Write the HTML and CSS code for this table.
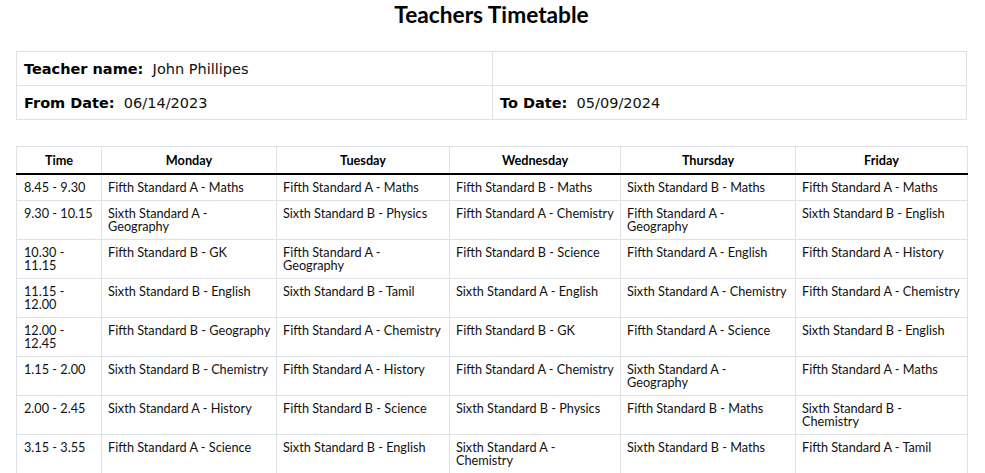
FILE: index.html
```html
<!DOCTYPE html>
<html lang="en">
<head>
    <meta charset="UTF-8">
    <meta name="viewport" content="width=device-width, initial-scale=1.0">
    <title>Teachers Timetable</title>
    <link rel="stylesheet" href="styles.css">
</head>
<body>

<div class="page">
    <h1 class="title">Teachers Timetable</h1>

    <table class="info">
        <tr>
            <td><b>Teacher name:</b>&nbsp; John Phillipes</td>
            <td></td>
        </tr>
        <tr>
            <td><b>From Date:</b>&nbsp; 06/14/2023</td>
            <td><b>To Date:</b>&nbsp; 05/09/2024</td>
        </tr>
    </table>

    <table class="timetable">
        <colgroup>
            <col class="col-time">
            <col class="col-mon">
            <col class="col-tue">
            <col class="col-wed">
            <col class="col-thu">
            <col class="col-fri">
        </colgroup>
        <thead>
            <tr>
                <th>Time</th>
                <th>Monday</th>
                <th>Tuesday</th>
                <th>Wednesday</th>
                <th>Thursday</th>
                <th>Friday</th>
            </tr>
        </thead>
        <tbody>
            <tr>
                <td>8.45 - 9.30</td>
                <td>Fifth Standard A - Maths</td>
                <td>Fifth Standard A - Maths</td>
                <td>Fifth Standard B - Maths</td>
                <td>Sixth Standard B - Maths</td>
                <td>Fifth Standard A - Maths</td>
            </tr>
            <tr>
                <td>9.30 - 10.15</td>
                <td>Sixth Standard A -<br>Geography</td>
                <td>Sixth Standard B - Physics</td>
                <td>Fifth Standard A - Chemistry</td>
                <td>Fifth Standard A -<br>Geography</td>
                <td>Sixth Standard B - English</td>
            </tr>
            <tr>
                <td>10.30 -<br>11.15</td>
                <td>Fifth Standard B - GK</td>
                <td>Fifth Standard A -<br>Geography</td>
                <td>Fifth Standard B - Science</td>
                <td>Fifth Standard A - English</td>
                <td>Fifth Standard A - History</td>
            </tr>
            <tr>
                <td>11.15 -<br>12.00</td>
                <td>Sixth Standard B - English</td>
                <td>Sixth Standard B - Tamil</td>
                <td>Sixth Standard A - English</td>
                <td>Sixth Standard A - Chemistry</td>
                <td>Fifth Standard A - Chemistry</td>
            </tr>
            <tr>
                <td>12.00 -<br>12.45</td>
                <td>Fifth Standard B - Geography</td>
                <td>Fifth Standard A - Chemistry</td>
                <td>Fifth Standard B - GK</td>
                <td>Fifth Standard A - Science</td>
                <td>Sixth Standard B - English</td>
            </tr>
            <tr>
                <td>1.15 - 2.00</td>
                <td>Sixth Standard B - Chemistry</td>
                <td>Fifth Standard A - History</td>
                <td>Fifth Standard A - Chemistry</td>
                <td>Sixth Standard A -<br>Geography</td>
                <td>Fifth Standard A - Maths</td>
            </tr>
            <tr>
                <td>2.00 - 2.45</td>
                <td>Sixth Standard A - History</td>
                <td>Fifth Standard B - Science</td>
                <td>Sixth Standard B - Physics</td>
                <td>Fifth Standard B - Maths</td>
                <td>Sixth Standard B -<br>Chemistry</td>
            </tr>
            <tr>
                <td>3.15 - 3.55</td>
                <td>Fifth Standard A - Science</td>
                <td>Sixth Standard B - English</td>
                <td>Sixth Standard A -<br>Chemistry</td>
                <td>Sixth Standard B - Maths</td>
                <td>Fifth Standard A - Tamil</td>
            </tr>
        </tbody>
    </table>
</div>

</body>
</html>
```

FILE: styles.css
```css
body {
    margin: 0;
    background: #fff;
    color: #000;
    font-family: 'Lato', sans-serif;
}

.page {
    width: 951px;
    padding: 0 16px;
}

.title {
    margin: 0;
    padding-top: 2px;
    height: 49px;
    text-align: center;
    font-size: 22.7px;
    font-weight: bold;
    line-height: 26px;
}

.info {
    width: 951px;
    border-collapse: collapse;
    table-layout: fixed;
    font-family: 'DejaVu Sans', sans-serif;
    font-size: 14.5px;
    color: #111;
}

.info td {
    border: 1px solid #dee2e6;
    padding: 0 7px;
    height: 33px;
}

.info td:first-child {
    width: 461px;
}

.info b {
    color: #000;
}

.timetable {
    width: 951px;
    margin-top: 26px;
    border-collapse: collapse;
    table-layout: fixed;
    font-size: 12.7px;
    line-height: 13px;
    color: #111;
}

.col-time { width: 85px; }
.col-mon { width: 175px; }
.col-tue { width: 173px; }
.col-wed { width: 171px; }
.col-thu { width: 175px; }
.col-fri { width: 172px; }

.timetable th,
.timetable td {
    border: 1px solid #dee2e6;
    text-align: left;
    vertical-align: top;
    white-space: nowrap;
    padding: 6px 6px 6px 6px;
}

.timetable td:first-child {
    padding-left: 7px;
}

.timetable th {
    text-align: center;
    font-weight: bold;
    color: #000;
    padding: 7px 6px 6px;
    border-bottom: 2px solid #000;
}
```
